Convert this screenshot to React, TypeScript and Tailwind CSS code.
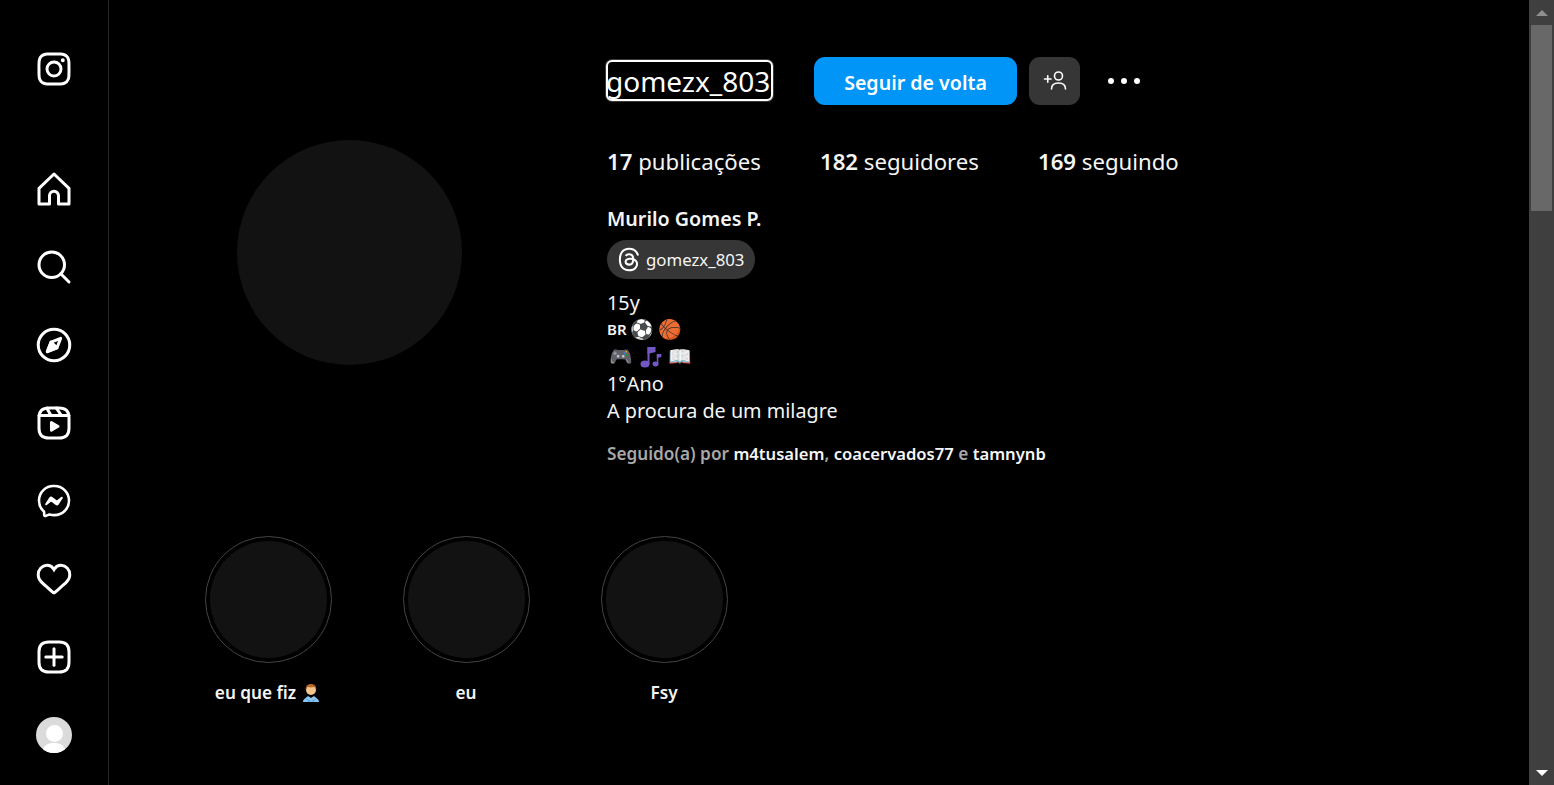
import React from 'react';
import { FaThreads } from 'react-icons/fa6';

const font = { fontFamily: '"Noto Sans", "Open Sans", sans-serif' };

const NavIcon: React.FC<{ children: React.ReactNode }> = ({ children }) => (
    <div className="h-[78px] flex items-center justify-center">
        <svg viewBox="0 0 24 24" className="w-[36px] h-[36px] text-white" fill="none" stroke="currentColor" strokeWidth={2} strokeLinecap="round" strokeLinejoin="round">
            {children}
        </svg>
    </div>
);

const Sidebar: React.FC = () => (
    <aside className="w-[109px] shrink-0 h-full border-r border-[#262626] pt-[30px] flex flex-col">
        <div className="mb-[42px]">
            <NavIcon>
                <path stroke="none" fill="currentColor" d="M12 2.982c2.937 0 3.285.011 4.445.064a6.087 6.087 0 0 1 2.042.379 3.408 3.408 0 0 1 1.265.823 3.408 3.408 0 0 1 .823 1.265 6.087 6.087 0 0 1 .379 2.042c.053 1.16.064 1.508.064 4.445s-.011 3.285-.064 4.445a6.087 6.087 0 0 1-.379 2.042 3.643 3.643 0 0 1-2.088 2.088 6.087 6.087 0 0 1-2.042.379c-1.16.053-1.508.064-4.445.064s-3.285-.011-4.445-.064a6.087 6.087 0 0 1-2.043-.379 3.408 3.408 0 0 1-1.264-.823 3.408 3.408 0 0 1-.823-1.265 6.087 6.087 0 0 1-.379-2.042c-.053-1.16-.064-1.508-.064-4.445s.011-3.285.064-4.445a6.087 6.087 0 0 1 .379-2.042 3.408 3.408 0 0 1 .823-1.265 3.408 3.408 0 0 1 1.265-.823 6.087 6.087 0 0 1 2.042-.379c1.16-.053 1.508-.064 4.445-.064M12 1c-2.987 0-3.362.013-4.535.066a8.074 8.074 0 0 0-2.67.511 5.392 5.392 0 0 0-1.949 1.27 5.392 5.392 0 0 0-1.269 1.948 8.074 8.074 0 0 0-.51 2.67C1.012 8.638 1 9.013 1 12s.013 3.362.066 4.535a8.074 8.074 0 0 0 .511 2.67 5.392 5.392 0 0 0 1.27 1.949 5.392 5.392 0 0 0 1.948 1.269 8.074 8.074 0 0 0 2.67.51C8.638 22.988 9.013 23 12 23s3.362-.013 4.535-.066a8.074 8.074 0 0 0 2.67-.511 5.625 5.625 0 0 0 3.218-3.218 8.074 8.074 0 0 0 .51-2.67C22.988 15.362 23 14.987 23 12s-.013-3.362-.066-4.535a8.074 8.074 0 0 0-.511-2.67 5.392 5.392 0 0 0-1.27-1.949 5.392 5.392 0 0 0-1.948-1.269 8.074 8.074 0 0 0-2.67-.51C15.362 1.012 14.987 1 12 1Zm0 5.351A5.649 5.649 0 1 0 17.649 12 5.649 5.649 0 0 0 12 6.351Zm0 9.316A3.667 3.667 0 1 1 15.667 12 3.667 3.667 0 0 1 12 15.667Zm5.872-10.859a1.32 1.32 0 1 0 1.32 1.32 1.32 1.32 0 0 0-1.32-1.32Z" />
            </NavIcon>
        </div>
        <NavIcon>
            <path d="M9.005 16.545a2.997 2.997 0 0 1 2.997-2.997A2.997 2.997 0 0 1 15 16.545V22h7V11.543L12 2 2 11.543V22h7.005Z" />
        </NavIcon>
        <NavIcon>
            <path d="M19 10.5A8.5 8.5 0 1 1 10.5 2a8.5 8.5 0 0 1 8.5 8.5Z" />
            <line x1="16.511" y1="16.511" x2="22" y2="22" />
        </NavIcon>
        <NavIcon>
            <polygon points="13.941 13.953 7.581 16.424 10.06 10.056 16.42 7.585 13.941 13.953" />
            <polygon fill="currentColor" points="10.06 10.056 13.949 13.945 7.581 16.424 10.06 10.056" />
            <circle cx="12.001" cy="12.005" r="10.5" />
        </NavIcon>
        <NavIcon>
            <line x1="2.049" y1="7.002" x2="21.95" y2="7.002" />
            <line x1="13.504" y1="2.001" x2="16.95" y2="7.002" />
            <line x1="7.207" y1="2.11" x2="10.003" y2="7.002" />
            <path d="M2 12.001v3.449c0 2.849.698 4.006 1.606 4.945.94.908 2.098 1.607 4.946 1.607h6.896c2.848 0 4.006-.699 4.946-1.607.908-.939 1.606-2.096 1.606-4.945V8.552c0-2.848-.698-4.006-1.606-4.945C19.454 2.699 18.296 2 15.448 2H8.552c-2.848 0-4.006.699-4.946 1.607C2.698 4.546 2 5.704 2 8.552Z" />
            <path stroke="none" fill="currentColor" d="M9.763 17.664a.908.908 0 0 1-.454-.787V11.63a.909.909 0 0 1 1.364-.788l4.545 2.624a.909.909 0 0 1 0 1.575l-4.545 2.624a.91.91 0 0 1-.91 0Z" />
        </NavIcon>
        <NavIcon>
            <path strokeWidth={1.739} d="M12.003 2.001a9.705 9.705 0 1 1 0 19.4 10.876 10.876 0 0 1-2.895-.384.798.798 0 0 0-.533.04l-1.984.876a.801.801 0 0 1-1.123-.708l-.054-1.78a.806.806 0 0 0-.27-.569 9.49 9.49 0 0 1-3.14-7.175 9.65 9.65 0 0 1 10-9.7Z" />
            <path stroke="none" fill="currentColor" d="M17.79 10.132a.659.659 0 0 0-.962-.873l-2.556 2.05a.63.63 0 0 1-.758.002L11.06 9.47a1.576 1.576 0 0 0-2.277.42l-2.567 3.98a.659.659 0 0 0 .961.875l2.556-2.049a.63.63 0 0 1 .759-.002l2.452 1.84a1.576 1.576 0 0 0 2.278-.42Z" />
        </NavIcon>
        <NavIcon>
            <path stroke="none" fill="currentColor" d="M16.792 3.904A4.989 4.989 0 0 1 21.5 9.122c0 3.072-2.652 4.959-5.197 7.222-2.512 2.243-3.865 3.469-4.303 3.752-.477-.309-2.143-1.823-4.303-3.752C5.141 14.072 2.5 12.167 2.5 9.122a4.989 4.989 0 0 1 4.708-5.218 4.21 4.21 0 0 1 3.675 1.941c.84 1.175.98 1.763 1.12 1.763s.278-.588 1.11-1.766a4.17 4.17 0 0 1 3.679-1.938m0-2a6.04 6.04 0 0 0-4.797 2.127 6.052 6.052 0 0 0-4.787-2.127A6.985 6.985 0 0 0 .5 9.122c0 3.61 2.55 5.827 5.015 7.97.283.246.569.494.853.747l1.027.918a44.998 44.998 0 0 0 3.518 3.018 2 2 0 0 0 2.174 0 45.263 45.263 0 0 0 3.626-3.115l.922-.824c.293-.26.59-.519.885-.774 2.334-2.025 4.98-4.32 4.98-7.94a6.985 6.985 0 0 0-6.708-7.218Z" />
        </NavIcon>
        <NavIcon>
            <path d="M2 12v3.45c0 2.849.698 4.005 1.606 4.944.94.909 2.098 1.608 4.946 1.608h6.896c2.848 0 4.006-.7 4.946-1.608C21.302 19.455 22 18.3 22 15.45V8.552c0-2.849-.698-4.006-1.606-4.945C19.454 2.7 18.296 2 15.448 2H8.552c-2.848 0-4.006.699-4.946 1.607C2.698 4.547 2 5.703 2 8.552Z" />
            <line x1="6.545" y1="12.001" x2="17.455" y2="12.003" />
            <line x1="12.003" y1="6.545" x2="12.003" y2="17.455" />
        </NavIcon>
        <div className="h-[78px] flex items-center justify-center">
            <div className="w-[36px] h-[36px] rounded-full bg-[#dbdbdb] overflow-hidden flex flex-col items-center pt-[8px]">
                <div className="w-[17px] h-[17px] rounded-full bg-white shrink-0" />
                <div className="w-[24px] h-[20px] rounded-full bg-white mt-[1px] shrink-0" />
            </div>
        </div>
    </aside>
);

const Highlight: React.FC<{ label: string; children?: React.ReactNode }> = ({ label, children }) => (
    <div className="w-[198px] flex flex-col items-center">
        <div className="w-[127px] h-[127px] rounded-full border-[1.4px] border-[#444444] flex items-center justify-center">
            <div className="w-[117px] h-[117px] rounded-full bg-[#121212]" />
        </div>
        <div className="mt-[18px] h-[24px] flex items-center gap-[5px] leading-[24px] text-[17.2px] font-semibold text-[#f5f5f5] whitespace-nowrap">
            {label}
            {children}
        </div>
    </div>
);

const Scrollbar: React.FC = () => (
    <div className="w-[25px] shrink-0 h-full bg-[#3f3f3f] flex flex-col items-center">
        <div className="h-[25px] shrink-0 flex items-center justify-center">
            <div className="w-0 h-0 border-x-[6px] border-x-transparent border-b-[6px] border-b-[#8f8f8f]" />
        </div>
        <div className="w-[21px] h-[186px] bg-[#686868]" />
        <div className="flex-1" />
        <div className="h-[25px] shrink-0 flex items-center justify-center">
            <div className="w-0 h-0 border-x-[6px] border-x-transparent border-t-[6px] border-t-white" />
        </div>
    </div>
);

const App: React.FC = () => {
    return (
        <div className="w-full h-[785px] overflow-hidden bg-black text-[#f5f5f5] flex" style={font}>
            <Sidebar />
            <main className="flex-1 min-w-0 h-full">
                <section className="flex pl-[128px] pt-[57px]">
                    <div className="w-[225px] h-[225px] mt-[83px] rounded-full bg-[#121212] shrink-0" />
                    <div className="ml-[145px] flex flex-col">
                        <div className="flex items-center h-[48px]">
                            <div className="ml-[1px] mb-[2px] w-[163px] h-[37px] rounded-[4px] outline-2 outline-white shadow-[0_0_0_3px_#3a3a3a] flex items-center text-[28px] text-white leading-none whitespace-nowrap">
                                <span className="-ml-[2px] mt-[2px]">gomezx_803</span>
                            </div>
                            <button className="ml-[43px] w-[203px] h-[48px] pt-[3px] rounded-[11px] bg-[#0095f6] text-white text-[19.6px] font-semibold">Seguir de volta</button>
                            <button className="ml-[12px] w-[51px] h-[48px] rounded-[11px] bg-[#363636] flex items-center justify-center">
                                <svg viewBox="0 0 24 24" className="w-[24px] h-[24px]" fill="none" stroke="white" strokeWidth={1.6} strokeLinecap="round">
                                    <circle cx="15.500" cy="7" r="4" />
                                    <path d="M8.500 20c0-4 2.500-6 7-6s7 2 7 6" />
                                    <path d="M1.500 10h6.500M4.750 6.750v6.500" />
                                </svg>
                            </button>
                            <div className="ml-[28px] flex gap-[7px]">
                                <div className="w-[6px] h-[6px] rounded-full bg-white" />
                                <div className="w-[6px] h-[6px] rounded-full bg-white" />
                                <div className="w-[6px] h-[6px] rounded-full bg-white" />
                            </div>
                        </div>
                        <div className="mt-[41px] flex gap-[59px] text-[22.2px] leading-[32px] whitespace-nowrap">
                            <span><b className="font-semibold">17</b> publicações</span>
                            <span><b className="font-semibold">182</b> seguidores</span>
                            <span><b className="font-semibold">169</b> seguindo</span>
                        </div>
                        <div className="mt-[27px] text-[19.7px] font-semibold leading-[27px]">Murilo Gomes P.</div>
                        <div className="mt-[8px] w-[148px] h-[39px] rounded-full bg-[#363636] flex items-center pl-[11px] gap-[6px]">
                            <FaThreads className="w-[22px] h-[25px] text-white" />
                            <span className="text-[16.8px] mt-[1px]">gomezx_803</span>
                        </div>
                        <div className="mt-[10px] text-[19.8px] leading-[27px]">
                            <div>15y</div>
                            <div className="flex items-center gap-[3px]"><span className="text-[15px] font-semibold">BR</span><span className="text-[19px]">⚽ 🏀</span></div>
                            <div className="pl-[2px] flex items-center text-[19px]">
                                <span>🎮</span>
                                <svg viewBox="0 0 22 22" className="w-[22px] h-[22px] ml-[7px] mr-[6px]" fill="#7358c4">
                                    <ellipse cx="5" cy="18" rx="4.500" ry="3.500" />
                                    <rect x="7.500" y="1" width="2" height="17" />
                                    <path d="M7.500 1h8v5l-8 2z" />
                                    <ellipse cx="15.500" cy="18" rx="3" ry="2.400" />
                                    <rect x="16.800" y="8" width="1.500" height="10" />
                                    <path d="M16.800 8h4.500v3l-4.500 1z" />
                                </svg>
                                <span>📖</span>
                            </div>
                            <div>1°Ano</div>
                            <div>A procura de um milagre</div>
                        </div>
                        <div className="mt-[18px] text-[17.2px] font-semibold leading-[24px] text-[#a8a8a8] whitespace-nowrap">
                            Seguido(a) por <span className="text-[16.6px] text-[#f5f5f5]">m4tusalem</span>, <span className="text-[16.6px] text-[#f5f5f5]">coacervados77</span> e <span className="text-[16.6px] text-[#f5f5f5]">tamnynb</span>
                        </div>
                    </div>
                </section>
                <section className="flex pl-[60px] mt-[70px]">
                    <Highlight label="eu que fiz">
                        <svg viewBox="0 0 20 20" className="w-[20px] h-[20px]">
                            <path d="M2 19c0-3 3-4 5-6l3 2 3-2c2 2 5 3 5 6z" fill="#8cc6f0" />
                            <path d="M4 15l8 4h-4zM16 15l-8 4h4z" fill="#5fa8e4" />
                            <circle cx="10" cy="7" r="5" fill="#f6c48d" />
                            <path d="M4.800 7c-.5-4 2-6 5.200-6s5.700 2 5.200 6c-.6-2-1.500-3-2.700-3-1.500.6-3.500.6-5 0-1.200 0-2.100 1-2.700 3z" fill="#b8682c" />
                        </svg>
                    </Highlight>
                    <Highlight label="eu" />
                    <Highlight label="Fsy" />
                </section>
            </main>
            <Scrollbar />
        </div>
    );
};

export default App;
